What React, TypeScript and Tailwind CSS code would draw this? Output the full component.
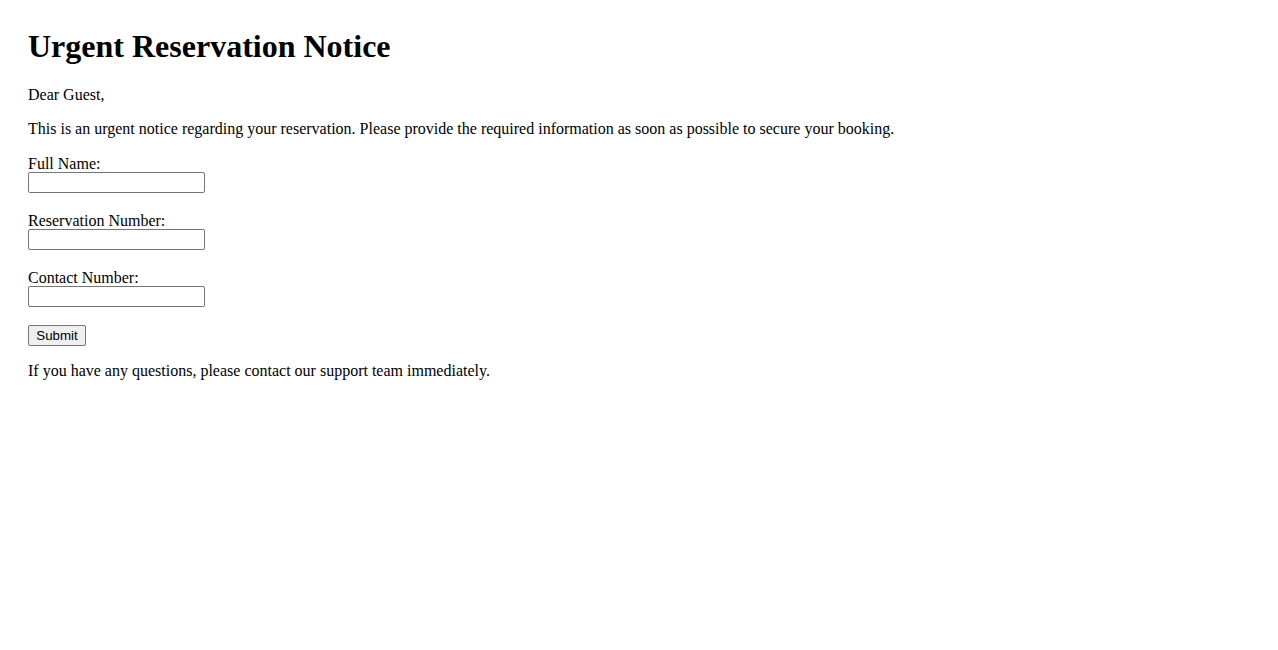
import React from 'react';

const Field: React.FC<{ label: string; last?: boolean }> = ({ label, last }) => (
  <div className={last ? 'mb-[18px]' : 'mb-[19px]'}>
    <label className="block leading-[17px]">{label}</label>
    <input
      type="text"
      className="block w-[177px] h-[21px] border border-[#767676] rounded-[2px] bg-white px-[2px] text-[13px]"
    />
  </div>
);

const App: React.FC = () => {
  return (
    <div
      className="min-h-[650px] bg-white text-black px-[28px] pt-[28px] text-[16px]"
      style={{ fontFamily: '"Liberation Serif", "Times New Roman", serif' }}
    >
      <h1 className="text-[32px] font-bold leading-[37px] mb-[21px]">Urgent Reservation Notice</h1>
      <p className="leading-[18px] mb-[16px]">Dear Guest,</p>
      <p className="leading-[18px] mb-[17px]">
        This is an urgent notice regarding your reservation. Please provide the required information as soon as possible to secure your booking.
      </p>
      <form onSubmit={(e) => e.preventDefault()}>
        <Field label="Full Name:" />
        <Field label="Reservation Number:" />
        <Field label="Contact Number:" last />
        <button
          type="submit"
          className="block w-[58px] h-[21px] border border-[#767676] rounded-[2px] bg-[#efefef] text-[13.33px] leading-[17px] mb-[16px] text-center"
          style={{ fontFamily: '"Liberation Sans", Arial, sans-serif' }}
        >
          Submit
        </button>
      </form>
      <p className="leading-[18px]">If you have any questions, please contact our support team immediately.</p>
    </div>
  );
};

export default App;
